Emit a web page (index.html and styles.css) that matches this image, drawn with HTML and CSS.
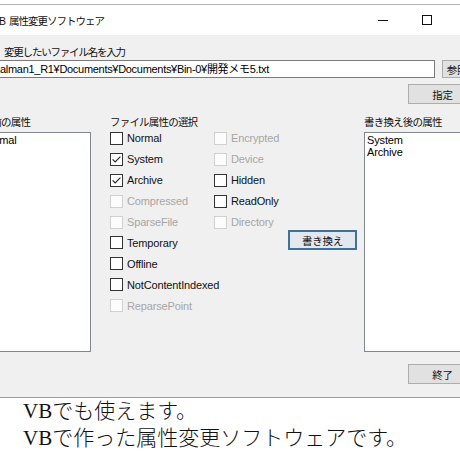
FILE: index.html
```html
<!DOCTYPE html>
<html lang="ja">
<head>
<meta charset="utf-8">
<title>VB 属性変更ソフトウェア</title>
<link rel="stylesheet" href="styles.css">
</head>
<body>
<div class="screen">
  <div class="window">
    <div class="titlebar">
      <span class="title">VB 属性変更ソフトウェア</span>
      <div class="controls">
        <span class="ctrl ctrl-min"></span>
        <span class="ctrl ctrl-max"></span>
      </div>
    </div>
    <div class="body">
      <div class="label lbl-file">変更したいファイル名を入力</div>
      <div class="path-row">
        <div class="textbox">Kalman1_R1¥Documents¥Documents¥Bin-0¥開発メモ5.txt</div>
        <div class="btn btn-ref">参照</div>
      </div>
      <div class="btn-row set-row"><div class="btn btn-wide">指定</div></div>
      <div class="main">
        <div class="col-left">
          <div class="label lbl-left">変更前の属性</div>
          <div class="listbox"><div class="item item-left">Normal</div></div>
        </div>
        <div class="col-mid">
          <div class="label">ファイル属性の選択</div>
          <div class="checks">
            <div class="check-col check-col-a">
              <div class="check"><span class="box"></span>Normal</div>
              <div class="check"><span class="box"><svg width="11" height="11" viewBox="0 0 11 11"><path d="M1.6 5.4 L4.2 8 L9.4 2.6" fill="none" stroke="#222" stroke-width="1.1"/></svg></span>System</div>
              <div class="check"><span class="box"><svg width="11" height="11" viewBox="0 0 11 11"><path d="M1.6 5.4 L4.2 8 L9.4 2.6" fill="none" stroke="#222" stroke-width="1.1"/></svg></span>Archive</div>
              <div class="check is-disabled"><span class="box"></span>Compressed</div>
              <div class="check is-disabled"><span class="box"></span>SparseFile</div>
              <div class="check"><span class="box"></span>Temporary</div>
              <div class="check"><span class="box"></span>Offline</div>
              <div class="check"><span class="box"></span>NotContentIndexed</div>
              <div class="check is-disabled"><span class="box"></span>ReparsePoint</div>
            </div>
            <div class="check-col">
              <div class="check is-disabled"><span class="box"></span>Encrypted</div>
              <div class="check is-disabled"><span class="box"></span>Device</div>
              <div class="check"><span class="box"></span>Hidden</div>
              <div class="check"><span class="box"></span>ReadOnly</div>
              <div class="check is-disabled"><span class="box"></span>Directory</div>
            </div>
          </div>
        </div>
        <div class="col-btn"><div class="btn btn-wide btn-default">書き換え</div></div>
        <div class="col-right">
          <div class="label">書き換え後の属性</div>
          <div class="listbox">
            <div class="item">System</div>
            <div class="item">Archive</div>
          </div>
        </div>
      </div>
      <div class="btn-row end-row"><div class="btn btn-wide">終了</div></div>
    </div>
  </div>
  <div class="caption">
    <p>VBでも使えます。</p>
    <p>VBで作った属性変更ソフトウェアです。</p>
  </div>
</div>
</body>
</html>
```

FILE: styles.css
```css
body {
  margin: 0;
}

.screen {
  width: 460px;
  height: 460px;
  overflow: hidden;
  background: #fff;
  color: #000;
  font-family: "Liberation Sans", "Noto Sans CJK JP", sans-serif;
}

.window {
  margin-top: 4px;
  margin-left: -30px;
  width: 490px;
  border-top: 1px solid #b4b4b4;
  border-bottom: 1px solid #9c9c9c;
}

.titlebar {
  height: 30px;
  display: flex;
  align-items: center;
  background: #fff;
  padding-right: 11px;
}

.title {
  margin-left: 23px;
  font-size: 10.5px;
  letter-spacing: -1px;
  word-spacing: 2px;
  color: #111;
  white-space: nowrap;
}

.controls {
  margin-left: auto;
  display: flex;
}

.ctrl {
  width: 44px;
  height: 30px;
  display: flex;
  align-items: center;
  justify-content: center;
}

.ctrl-min::before {
  content: "";
  width: 10px;
  height: 1px;
  background: #111;
}

.ctrl-max::before {
  content: "";
  width: 10px;
  height: 10px;
  box-sizing: border-box;
  border: 1px solid #111;
}

.body {
  height: 362px;
  box-sizing: border-box;
  background: #f0f0f0;
  padding: 11px 0 0 9px;
}

.label {
  font-family: "Noto Sans CJK JP", sans-serif;
  font-size: 10.5px;
  line-height: 12px;
  letter-spacing: -0.8px;
  white-space: nowrap;
  color: #111;
}

.lbl-file {
  margin-left: 25px;
  letter-spacing: -1.2px;
}

.lbl-left {
  margin-left: -7px;
}

.path-row {
  display: flex;
  gap: 7px;
  margin-top: 2px;
  margin-left: 11px;
}

.textbox {
  flex-shrink: 0;
  width: 445px;
  height: 18px;
  box-sizing: border-box;
  border: 1px solid #7a7a7a;
  background: #fff;
  padding: 0 2px;
  font-size: 11px;
  letter-spacing: -0.3px;
  line-height: 16px;
  white-space: nowrap;
  overflow: hidden;
}

.btn {
  flex-shrink: 0;
  height: 20px;
  box-sizing: border-box;
  border: 1px solid #adadad;
  background: #e1e1e1;
  display: flex;
  align-items: center;
  justify-content: center;
  font-family: "Noto Sans CJK JP", sans-serif;
  font-size: 10.5px;
  letter-spacing: -0.3px;
  color: #111;
  white-space: nowrap;
}

.btn-ref {
  width: 30px;
  height: 18px;
}

.btn-wide {
  width: 69px;
}

.btn-default {
  border: 2px solid #3c7199;
  background: #e2e8ee;
}

.btn-row {
  display: flex;
  padding-left: 429px;
}

.set-row {
  margin-top: 6px;
}

.end-row {
  margin-top: 12px;
}

.main {
  display: flex;
  align-items: flex-start;
  margin-top: 12px;
}

.col-left {
  flex-shrink: 0;
  width: 112px;
}

.listbox {
  margin-top: 4px;
  height: 220px;
  box-sizing: border-box;
  border: 1px solid #828790;
  background: #fff;
  padding: 1px 2px;
  font-size: 11px;
  line-height: 12px;
  letter-spacing: -0.15px;
}

.col-mid {
  flex-shrink: 0;
  width: 178px;
  margin-left: 19px;
}

.checks {
  display: flex;
}

.check-col-a {
  width: 104px;
}

.check {
  display: flex;
  align-items: center;
  height: 20.9px;
  font-size: 11px;
  letter-spacing: -0.15px;
  white-space: nowrap;
  color: #111;
}

.box {
  flex-shrink: 0;
  width: 13px;
  height: 13px;
  box-sizing: border-box;
  border: 1px solid #333;
  background: #fff;
  margin-right: 4px;
  display: flex;
  align-items: center;
  justify-content: center;
}

.check.is-disabled {
  color: #a6a6a6;
}

.check.is-disabled .box {
  border-color: #d0d0d0;
  background: #fcfcfc;
}

.col-btn {
  flex-shrink: 0;
  width: 69px;
  padding-top: 114px;
}

.col-right {
  flex-shrink: 0;
  width: 130px;
  margin-left: 7px;
}

.caption {
  padding-left: 23px;
  font-family: "Liberation Serif", "Noto Sans CJK JP", serif;
  font-size: 21px;
  line-height: 27px;
  font-weight: 300;
  color: #111;
}

.caption p {
  margin: 0;
  white-space: nowrap;
}
```
